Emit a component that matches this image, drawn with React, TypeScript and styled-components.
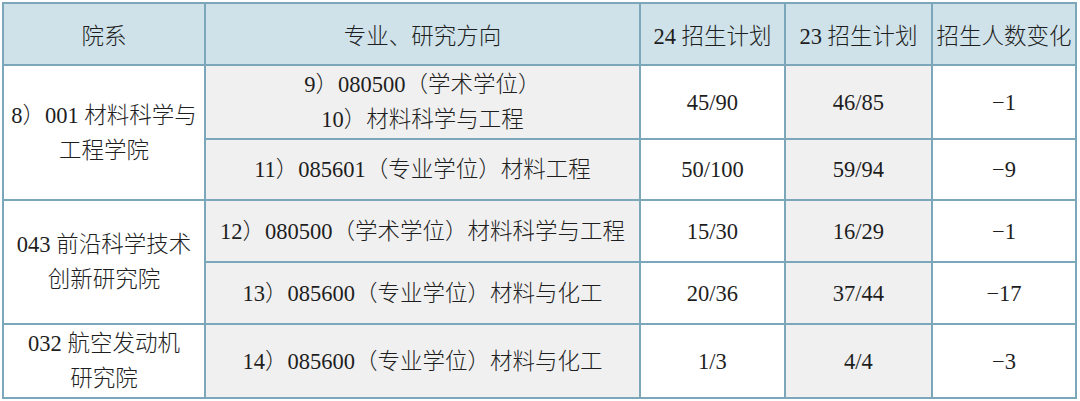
import styled, { createGlobalStyle } from "styled-components";

const GlobalStyle = createGlobalStyle`
    body {
        margin: 0;
        padding: 2px 0 0 2px;
        background: #ffffff;
    }
`

type Row = {
    major: string[]
    plan24: string
    plan23: string
    change: string
}

type Group = {
    school: string[]
    rows: Row[]
}

const groups: Group[] = [
    {
        school: ["8）001 材料科学与", "工程学院"],
        rows: [
            { major: ["9）080500（学术学位）", "10）材料科学与工程"], plan24: "45/90", plan23: "46/85", change: "−1" },
            { major: ["11）085601（专业学位）材料工程"], plan24: "50/100", plan23: "59/94", change: "−9" },
        ],
    },
    {
        school: ["043 前沿科学技术", "创新研究院"],
        rows: [
            { major: ["12）080500（学术学位）材料科学与工程"], plan24: "15/30", plan23: "16/29", change: "−1" },
            { major: ["13）085600（专业学位）材料与化工"], plan24: "20/36", plan23: "37/44", change: "−17" },
        ],
    },
    {
        school: ["032 航空发动机", "研究院"],
        rows: [
            { major: ["14）085600（专业学位）材料与化工"], plan24: "1/3", plan23: "4/4", change: "−3" },
        ],
    },
]

// row heights in px, taken per body row
const rowHeights = [74, 61, 62, 62, 74]

function Lines({ lines }: { lines: string[] }) {
    return (
        <>
            {lines.map((l, i) => (
                <span key={i}>
                    {l}
                    {i < lines.length - 1 && <br />}
                </span>
            ))}
        </>
    )
}

function App() {
    let rowIndex = 0
    return (
        <>
            <GlobalStyle />
            <Table>
                <colgroup>
                    <col style={{ width: 202 }} />
                    <col style={{ width: 435 }} />
                    <col style={{ width: 145 }} />
                    <col style={{ width: 147 }} />
                    <col style={{ width: 144 }} />
                </colgroup>
                <thead>
                    <HeadRow>
                        <Th>院系</Th>
                        <Th>专业、研究方向</Th>
                        <Th>24 招生计划</Th>
                        <Th>23 招生计划</Th>
                        <Th>招生人数变化</Th>
                    </HeadRow>
                </thead>
                <tbody>
                    {groups.map((g) =>
                        g.rows.map((r, i) => {
                            const h = rowHeights[rowIndex++]
                            return (
                                <tr key={r.major[0]} style={{ height: h }}>
                                    {i === 0 && (
                                        <Td rowSpan={g.rows.length} $shade={false}>
                                            <Lines lines={g.school} />
                                        </Td>
                                    )}
                                    <Td $shade>
                                        <Lines lines={r.major} />
                                    </Td>
                                    <Td $shade={false}>{r.plan24}</Td>
                                    <Td $shade>{r.plan23}</Td>
                                    <Td $shade={false}>{r.change}</Td>
                                </tr>
                            )
                        })
                    )}
                </tbody>
            </Table>
        </>
    )
}

export default App

const Table = styled.table`
    border-collapse: collapse;
    table-layout: fixed;
    width: 1075px;
    border: 2px solid #7ca7ba;
    font-family: "Liberation Serif", "Noto Sans CJK SC", serif;
    font-size: 22.5px;
    font-weight: 300;
    color: #1e1e1e;
`

const HeadRow = styled.tr`
    height: 62px;
    background: #cfe2e9;
`

const Th = styled.th`
    border: 2px solid #7ca7ba;
    font-weight: 300;
    text-align: center;
    vertical-align: middle;
    padding: 0;
    white-space: nowrap;
`

const Td = styled.td<{ $shade: boolean }>`
    border: 2px solid #7ca7ba;
    background: ${(p) => (p.$shade ? "#f0f0f0" : "#ffffff")};
    text-align: center;
    vertical-align: middle;
    padding: 0;
    line-height: 35px;
    white-space: nowrap;
`
